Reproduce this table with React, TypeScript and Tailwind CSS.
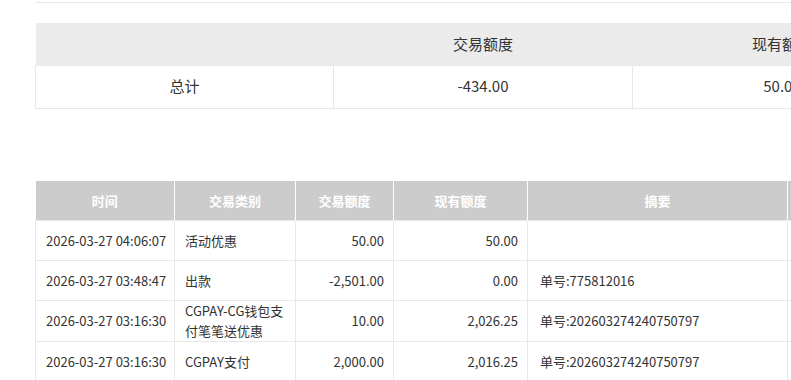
const rows = [
  { time: "2026-03-27 04:06:07", type: "活动优惠", amount: "50.00", balance: "50.00", memo: "" },
  { time: "2026-03-27 03:48:47", type: "出款", amount: "-2,501.00", balance: "0.00", memo: "单号:775812016" },
  { time: "2026-03-27 03:16:30", type: "CGPAY-CG钱包支付笔笔送优惠", amount: "10.00", balance: "2,026.25", memo: "单号:202603274240750797" },
  { time: "2026-03-27 03:16:30", type: "CGPAY支付", amount: "2,000.00", balance: "2,016.25", memo: "单号:202603274240750797" },
];

export default function App() {
  return (
    <div className="w-[791px] h-[380px] overflow-hidden bg-white text-[#333] font-['Noto_Sans_CJK_SC','Noto_Sans',sans-serif] pt-[2px] pl-[35px]">
      <div className="w-[1200px] border-t border-[#e8e8e8]" />

      <table className="mt-[20px] w-[1196px] table-fixed border-collapse text-[15px]">
        <thead>
          <tr className="bg-[#ebebeb] h-[42px]">
            <th className="w-[298px] font-normal" />
            <th className="w-[299px] font-normal">交易额度</th>
            <th className="w-[299px] font-normal">现有额度</th>
            <th className="w-[300px] font-normal" />
          </tr>
        </thead>
        <tbody>
          <tr className="h-[43px]">
            <td className="border border-[#e8e8e8] text-center">总计</td>
            <td className="border border-[#e8e8e8] text-center">-434.00</td>
            <td className="border border-[#e8e8e8] text-center">50.00</td>
            <td className="border border-[#e8e8e8] text-center" />
          </tr>
        </tbody>
      </table>

      <table className="mt-[72px] w-[900px] table-fixed border-collapse text-[13px]">
        <thead>
          <tr className="bg-[#cccccc] h-[40px] text-white font-bold">
            <th className="w-[139px] border-r border-white">时间</th>
            <th className="w-[121px] border-r border-white">交易类别</th>
            <th className="w-[98px] border-r border-white">交易额度</th>
            <th className="w-[134px] border-r border-white">现有额度</th>
            <th className="w-[260px] border-r border-white">摘要</th>
            <th className="w-[148px]" />
          </tr>
        </thead>
        <tbody>
          {rows.map((r, i) => (
            <tr key={i} className="h-[40px] leading-[20px]">
              <td className="border border-[#e8e8e8] px-[10px] whitespace-nowrap">{r.time}</td>
              <td className="border border-[#e8e8e8] px-[10px]">{r.type}</td>
              <td className="border border-[#e8e8e8] px-[9px] text-right">{r.amount}</td>
              <td className="border border-[#e8e8e8] px-[9px] text-right">{r.balance}</td>
              <td className="border border-[#e8e8e8] px-[12px]">{r.memo}</td>
              <td className="border border-[#e8e8e8]" />
            </tr>
          ))}
        </tbody>
      </table>
    </div>
  );
}
